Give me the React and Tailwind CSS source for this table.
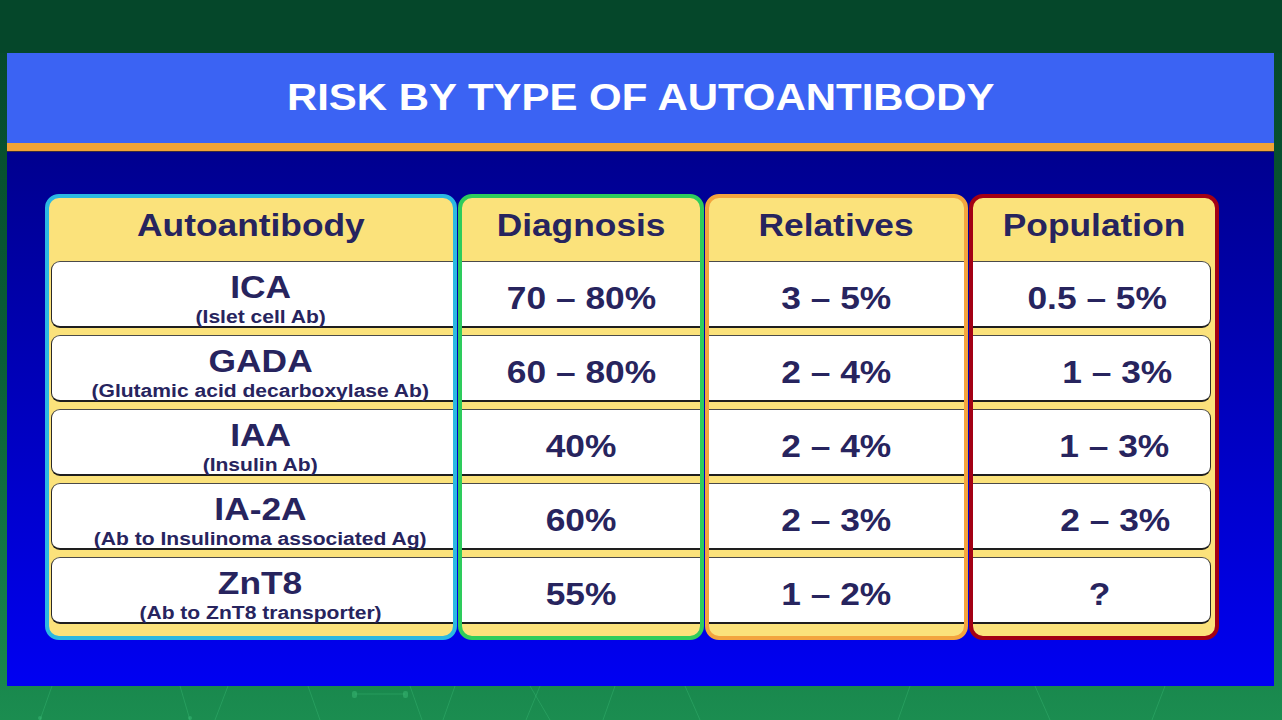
import React from 'react';

const FONT = { fontFamily: '"Liberation Sans", Arial, Helvetica, sans-serif' };

const rows = [
  { name: 'ICA',   sub: '(Islet cell Ab)',                    dx: '70 – 80%', rel: '3 – 5%', pop: '0.5 – 5%', popPad: 'pl-[12px]' },
  { name: 'GADA',  sub: '(Glutamic acid decarboxylase Ab)',   dx: '60 – 80%', rel: '2 – 4%', pop: '1 – 3%',   popPad: 'pl-[52px]' },
  { name: 'IAA',   sub: '(Insulin Ab)',                       dx: '40%',      rel: '2 – 4%', pop: '1 – 3%',   popPad: 'pl-[46px]' },
  { name: 'IA-2A', sub: '(Ab to Insulinoma associated Ag)',   dx: '60%',      rel: '2 – 3%', pop: '2 – 3%',   popPad: 'pl-[48px]' },
  { name: 'ZnT8',  sub: '(Ab to ZnT8 transporter)',           dx: '55%',      rel: '1 – 2%', pop: '?',        popPad: 'pl-[16px]' },
];

// the slide text is stretched a little wider than the font
function Wide({ className = 'scale-x-[1.14]', children }) {
  return <span className={`inline-block origin-center whitespace-nowrap ${className}`}>{children}</span>;
}

function Column({ title, border, width, children }) {
  return (
    <div className={`${width} ${border} border-[4px] rounded-[14px] bg-[#fbe27b] flex flex-col pb-[12px]`}>
      <div className="h-[63px] pt-[12px] text-center text-[31px] leading-[32px] font-bold text-[#27245e]">
        <Wide>{title}</Wide>
      </div>
      <div className="flex flex-col gap-[7px]">{children}</div>
    </div>
  );
}

function Cell({ side, className = '', children }) {
  const shape =
    side === 'left'
      ? 'ml-[2px] rounded-l-[9px] border-l-[1.5px]'
      : side === 'right'
      ? 'mr-[4px] rounded-r-[9px] border-r-[1.5px]'
      : '';
  return (
    <div className={`h-[67px] bg-white border-t-[1.5px] border-t-[#4a4a4a] border-b-[2px] border-b-[#1e1e1e] border-l-[#2a2a2a] border-r-[#2a2a2a] ${shape} ${className}`}>
      {children}
    </div>
  );
}

function NumCell({ side, pad = '', children }) {
  return (
    <Cell side={side} className={`flex items-center justify-center pt-[10px] ${pad}`}>
      <span className="text-[31px] leading-[32px] font-bold text-[#27245e]">
        <Wide>{children}</Wide>
      </span>
    </Cell>
  );
}

export default function App() {
  return (
    <div style={FONT} className="w-[1282px] h-[720px] overflow-hidden flex flex-col bg-gradient-to-b from-[#05462a] via-[#0a5f36] to-[#1b8d50]">
      <div className="h-[53px] shrink-0 bg-[#05472a]" />

      <div className="ml-[7px] w-[1267px] flex flex-col shrink-0">
        {/* title bar */}
        <div className="h-[90px] bg-[#3b63f3] flex items-center justify-center">
          <h1 className="text-[36px] leading-[40px] font-bold text-white">
            <Wide className="scale-x-[1.165]">RISK BY TYPE OF AUTOANTIBODY</Wide>
          </h1>
        </div>
        <div className="h-[9px] bg-[#f0a336] border-b border-[#3a2a40]" />

        {/* table */}
        <div className="h-[534px] bg-gradient-to-b from-[#00008f] to-[#0000f2] pt-[42px] pl-[38px]">
          <div className="flex gap-[1px]">
            <Column title="Autoantibody" border="border-[#2bb8e2]" width="w-[412px]">
              {rows.map(r => (
                <Cell key={r.name} side="left" className="flex flex-col items-center pt-[10px] pl-4 text-[#27245e] font-bold">
                  <span className="text-[31px] leading-[32px]"><Wide>{r.name}</Wide></span>
                  <span className="text-[18px] leading-[20px] mt-[3px]"><Wide className="scale-x-[1.17]">{r.sub}</Wide></span>
                </Cell>
              ))}
            </Column>

            <Column title="Diagnosis" border="border-[#2ecc5c]" width="w-[246px]">
              {rows.map(r => <NumCell key={r.name}>{r.dx}</NumCell>)}
            </Column>

            <Column title="Relatives" border="border-[#f3a43e]" width="w-[263px]">
              {rows.map(r => <NumCell key={r.name}>{r.rel}</NumCell>)}
            </Column>

            <Column title="Population" border="border-[#a30014]" width="w-[250px]">
              {rows.map(r => <NumCell key={r.name} side="right" pad={r.popPad}>{r.pop}</NumCell>)}
            </Column>
          </div>
        </div>
      </div>

      {/* green footer with faint network lines */}
      <div className="flex-1">
        <svg width="1282" height="34" viewBox="0 0 1282 34" className="block">
          <g stroke="#3fbf7a" strokeOpacity="0.35" strokeWidth="1" fill="none">
            <line x1="52" y1="0" x2="40" y2="34" />
            <line x1="180" y1="0" x2="190" y2="34" />
            <line x1="228" y1="0" x2="215" y2="34" />
            <line x1="308" y1="0" x2="320" y2="34" />
            <line x1="355" y1="8" x2="405" y2="8" />
            <line x1="410" y1="0" x2="422" y2="34" />
            <line x1="455" y1="0" x2="443" y2="34" />
            <line x1="540" y1="0" x2="526" y2="34" />
            <line x1="530" y1="0" x2="550" y2="34" />
            <line x1="615" y1="0" x2="603" y2="34" />
            <line x1="685" y1="0" x2="700" y2="34" />
            <line x1="910" y1="0" x2="898" y2="34" />
            <line x1="1035" y1="0" x2="1050" y2="34" />
            <line x1="1165" y1="0" x2="1152" y2="34" />
          </g>
          <g fill="#3fbf7a" fillOpacity="0.45">
            <rect x="352" y="5" width="5" height="7" rx="2" />
            <rect x="403" y="5" width="5" height="7" rx="2" />
            <circle cx="40" cy="32" r="2" />
            <circle cx="190" cy="32" r="2" />
          </g>
        </svg>
      </div>
    </div>
  );
}
